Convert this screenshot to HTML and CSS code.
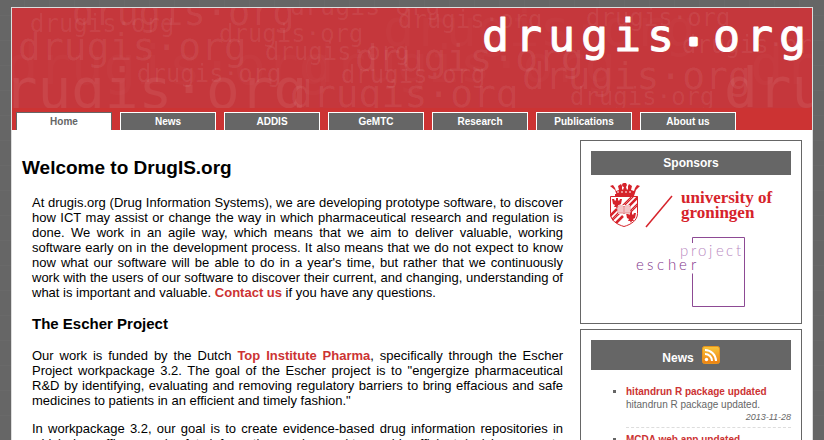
FILE: index.html
```html
<!DOCTYPE html>
<html lang="en">
<head>
<meta charset="utf-8">
<title>DrugIS.org</title>
<link rel="stylesheet" href="styles.css">
</head>
<body>
<div class="page">
  <header class="header">
    <svg class="banner" viewBox="12 8 800 100" preserveAspectRatio="xMaxYMin slice" role="img" aria-label="drugis.org">
      <g class="ghosts" aria-hidden="true">
        <g class="faint">
          <text x="6" y="84" font-size="54">drugis·org</text>
          <text x="50" y="34" font-size="38">drugis·org</text>
          <text x="165" y="57" font-size="24">drugis·org</text>
          <text x="383" y="46" font-size="52">drugis·org</text>
          <text x="303" y="82" font-size="52">drugis·org</text>
          <text x="598" y="80" font-size="24">drugis·org</text>
          <text x="710" y="28" font-size="24">drugis·org</text>
          <text x="750" y="84" font-size="56">drugis·org</text>
          <text x="295" y="35" font-size="24">drugis·org</text>
        </g>
        <text x="30" y="32" font-size="24">drugis·org</text>
        <text x="72" y="25" font-size="37">drugis·org</text>
        <text x="18" y="60" font-size="38">drugis·org</text>
        <text x="137" y="82" font-size="24">drugis·org</text>
        <text x="-30" y="108" font-size="56">drugis·org</text>
        <text x="219" y="42" font-size="24">drugis·org</text>
        <text x="265" y="60" font-size="24">drugis·org</text>
        <text x="290" y="15" font-size="25">drugis·org</text>
        <text x="398" y="28" font-size="24">drugis·org</text>
        <text x="355" y="71" font-size="38">drugis·org</text>
        <text x="341" y="83" font-size="24">drugis·org</text>
        <text x="290" y="107" font-size="38">drugis·org</text>
        <text x="522" y="89" font-size="38">drugis·org</text>
        <text x="570" y="105" font-size="24">drugis·org</text>
        <text x="586" y="26" font-size="24">drugis·org</text>
        <text x="682" y="53" font-size="24">drugis·org</text>
        <text x="724" y="107" font-size="56">drugis·org</text>
      </g>
      <text class="wordmark" x="482 515 548 581 614 647 680 713 746 779" y="51" font-size="45">drugis<tspan class="dot" y="57">·</tspan><tspan y="51">org</tspan></text>
    </svg>
    <nav class="tabs">
      <a class="tab current" href="#home">Home</a>
      <a class="tab" href="#news">News</a>
      <a class="tab" href="#addis">ADDIS</a>
      <a class="tab" href="#gemtc">GeMTC</a>
      <a class="tab" href="#research">Research</a>
      <a class="tab" href="#publications">Publications</a>
      <a class="tab" href="#about">About us</a>
    </nav>
  </header>
  <div class="columns">
    <main class="main">
      <h1>Welcome to DrugIS.org</h1>
      <div class="text">
        <p>At drugis.org (Drug Information Systems), we are developing prototype software, to discover how ICT may assist or change the way in which pharmaceutical research and regulation is done. We work in an agile way, which means that we aim to deliver valuable, working software early on in the development process. It also means that we do not expect to know now what our software will be able to do in a year's time, but rather that we continuously work with the users of our software to discover their current, and changing, understanding of what is important and valuable. <a href="#about">Contact us</a> if you have any questions.</p>
        <h2>The Escher Project</h2>
        <p>Our work is funded by the Dutch <a href="#tipharma">Top Institute Pharma</a>, specifically through the Escher Project workpackage 3.2. The goal of the Escher project is to "engergize pharmaceutical R&amp;D by identifying, evaluating and removing regulatory barriers to bring effacious and safe medicines to patients in an efficient and timely fashion."</p>
        <p>In workpackage 3.2, our goal is to create evidence-based drug information repositories in which drug efficacy and safety information can be used to provide efficient decision support.</p>
      </div>
    </main>
    <aside class="sidebar">
      <section class="box sponsors">
        <h3>Sponsors</h3>
        <a class="sponsor" href="#groningen">
          <svg width="164" height="46" viewBox="609 182 164 46" role="img" aria-label="university of groningen">
            <g fill="#d6232b" stroke="none">
              <path d="M610 186l3-1 2 3 1 3 3-1-1-4 3-2 1 2 0 3 1 1 1-3-1-2 1-2 2 0 1 2-1 2 1 3 1-1 0-3 1-2 3 2-1 4 3 1 1-3 2-3 3 1-4 4-2 6h-17l-2-6z"/>
              <circle cx="624" cy="185" r="2"/>
              <path d="M615 194h18v2h-18z"/>
            </g>
            <path d="M617 192h14" stroke="#fff" stroke-dasharray="2 2" fill="none"/>
            <clipPath id="shield"><path d="M610 196.500h28v17c0 7-7 11-14 13-7-2-14-6-14-13z"/></clipPath>
            <g clip-path="url(#shield)">
              <path fill="#fff" d="M610 196h28v32h-28z"/>
              <path d="M622 207l13-13M625 210l14-14M630 212l10-10M607 219l10-10M608 224l12-12M613 226l10-10" stroke="#d6232b" stroke-width="2.500"/>
              <path d="M622 207l13-13M630 212l10-10M608 224l12-12" stroke="#fff" stroke-width=".5" stroke-dasharray="2 1"/>
              <g fill="#d6232b">
                <path id="eagle" d="M612 199l2 0 1 2 1-1 0-2 2 0 0 2 1 1 1-2 2 0-1 5-2 1 1 2-2 0-1 2-1-2-2 0 1-2-2-1z"/>
                <use href="#eagle" x="14" y="14"/>
              </g>
              <path fill="#fff" d="M618 205h12v9h-12z"/>
              <path d="M618 206h5l1 1 1-1h5v7h-5l-1 1-1-1h-5zM619 208h10M619 210h10M619 212h10M624 206v8" fill="none" stroke="#e58b8f"/>
            </g>
            <path d="M610.500 196.500h27v17c0 7-6.500 11-13.500 13-7-2-13.500-6-13.500-13z" fill="none" stroke="#d6232b"/>
            <path d="M646 227l26-31" stroke="#d6232b" stroke-width="1.500"/>
            <text class="groningen" x="681" y="203">university of</text>
            <text class="groningen" x="681" y="218">groningen</text>
          </svg>
        </a>
        <a class="sponsor" href="#escher">
          <svg width="110" height="72" viewBox="636 236 110 72" role="img" aria-label="escher project">
            <path d="M692.500 243v-5.500h52v69h-52v-33" fill="none" stroke="#8d4a94"/>
            <text class="project" x="680 691 698 709 716 726 736" y="256">project</text>
            <text class="escher" x="636 647 657 668 679 691" y="270">escher</text>
          </svg>
        </a>
      </section>
      <section class="box news">
        <h3>News
          <a href="#feed" aria-label="News feed"><svg class="feed" width="18" height="18" viewBox="0 0 18 18">
            <defs><linearGradient id="orange" x1="0" y1="0" x2="0" y2="1"><stop offset="0" stop-color="#f8c63c"/><stop offset="1" stop-color="#ee8012"/></linearGradient></defs>
            <rect x=".5" y=".5" width="17" height="17" rx="2" fill="url(#orange)" stroke="#e8941c"/>
            <circle cx="4.500" cy="13.500" r="1.700" fill="#fff"/>
            <path d="M3 8a7 7 0 0 1 7 7M3 4a11 11 0 0 1 11 11" fill="none" stroke="#fff" stroke-width="2"/>
          </svg></a>
        </h3>
        <ul>
          <li><a href="#hitandrun">hitandrun R package updated</a><span>hitandrun R package updated.</span><time>2013-11-28</time></li>
          <li><a href="#mcda">MCDA web app updated</a></li>
        </ul>
      </section>
    </aside>
  </div>
</div>
</body>
</html>
```
FILE: styles.css
```css
* { box-sizing: border-box; }

html { overflow: hidden; height: 100%; }

body {
  height: 100%;
  margin: 0;
  padding: 7px 11px 0;
  overflow: hidden;
  background-color: #666;
  background-image:
    repeating-linear-gradient(90deg, transparent 0 24px, #696969 24px 25px),
    repeating-linear-gradient(0deg, transparent 0 24px, #696969 24px 25px);
  color: #000;
  font: 13px/15px "Liberation Sans", Arial, sans-serif;
}

.page {
  max-width: 802px;
  margin: 0 auto;
  border: 1px solid #ddd;
  background: #fff;
}

.header { background: #c33; }

.banner {
  display: block;
  width: 100%;
  height: 100px;
  background: #c5373c;
  font-family: "DejaVu Sans Mono", monospace;
}

.ghosts { fill: #fff; fill-opacity: 0.07; }
.faint { fill-opacity: 0.02; }
.wordmark { fill: #fff; stroke: #fff; stroke-width: 1px; stroke-linejoin: round; }
.wordmark .dot { stroke-width: 3px; }

.tabs {
  display: flex;
  gap: 8px;
  padding: 4px 4px 0;
}

.tab {
  flex: 0 1 96px;
  height: 18px;
  border: 1px solid #fff;
  border-bottom: 0;
  background: #666;
  color: #fff;
  font-size: 10px;
  font-weight: bold;
  line-height: 17px;
  text-align: center;
  text-decoration: none;
}

.tab.current {
  border-color: #666;
  background: #fff;
  color: #666;
}

.columns {
  display: flex;
  align-items: flex-start;
  gap: 17px;
  padding: 10px 10px 20px;
}

.main { flex: 1; padding-top: 17px; }

h1 { margin: 0 0 16px; font-size: 19px; line-height: 22px; }
h2 { margin: 15px 0 16px; font-size: 15px; line-height: 17px; }
.text { padding-left: 10px; }
.text p { margin: 0 0 13px; text-align: justify; }
.text a { color: #c33; font-weight: bold; text-decoration: none; }

.sidebar {
  display: flex;
  flex: 0 0 222px;
  flex-direction: column;
  gap: 5px;
}

.box { padding: 10px; border: 1px solid #666; }

.box h3 {
  margin: 0;
  padding: 0 8px;
  background: #666;
  color: #fff;
  font-size: 12px;
  line-height: 24px;
  text-align: center;
}

.sponsor { display: block; text-align: center; }
.sponsor svg { display: block; margin: 7px auto 5px; }
.sponsor + .sponsor svg { margin-top: 8px; }
.groningen { fill: #d6232b; font: bold 17px "Liberation Serif", serif; }
.project, .escher { font: 300 15px Lato, sans-serif; }
.project { fill: #b98abf; }
.escher { fill: #7f3489; }

.news h3 {
  display: flex;
  align-items: flex-end;
  justify-content: center;
  gap: 8px;
  height: 30px;
}

.news h3 a { align-self: center; }
.feed { display: block; }

.news ul {
  margin: 15px 0 0;
  padding: 0 0 0 35px;
  color: #666;
  font-size: 10px;
  line-height: 13px;
  list-style: square;
}

.news li { margin-bottom: 5px; border-bottom: 1px dashed #ddd; padding-bottom: 4px; }
.news li a { display: block; color: #c33; font-weight: bold; text-decoration: none; }
.news li span { display: block; }
.news time { display: block; font-size: 9px; font-style: italic; line-height: 12px; text-align: right; }
```
